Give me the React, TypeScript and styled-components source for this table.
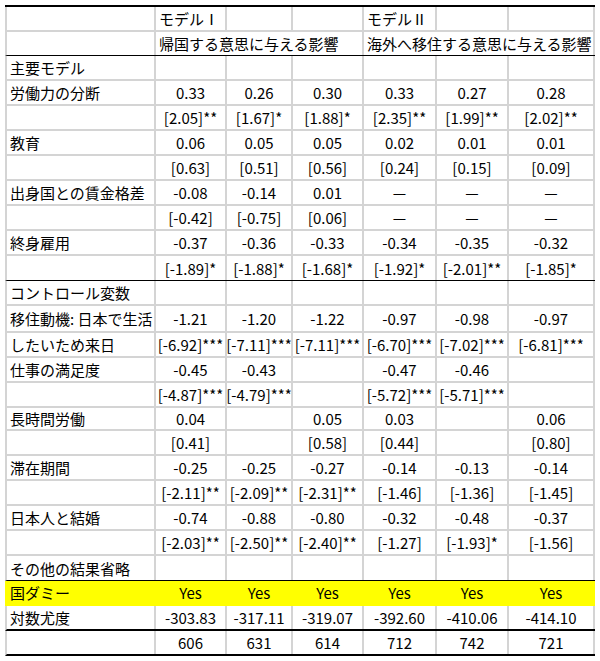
import React from "react";
import styled, { createGlobalStyle } from "styled-components";

const GRID = "#d4d4d4";
const YELLOW = "#ffff00";
const COLS = "149px 71px 66px 71px 73px 72px 86px";

type Rule = "grid" | "thin" | "thick" | "none";

interface IRow {
  label?: string;
  values?: string[];
  height?: number;
  rule?: Rule;
  highlight?: boolean;
}

const GlobalStyle = createGlobalStyle`
  html, body {
    margin: 0;
    padding: 0;
    background: #fff;
  }
  body {
    font-family: "Noto Sans CJK JP", "Noto Sans", sans-serif;
    color: #000;
  }
`;

const rows: IRow[] = [
  { label: "主要モデル" },
  { label: "労働力の分断", values: ["0.33", "0.26", "0.30", "0.33", "0.27", "0.28"] },
  { values: ["[2.05]**", "[1.67]*", "[1.88]*", "[2.35]**", "[1.99]**", "[2.02]**"] },
  { label: "教育", values: ["0.06", "0.05", "0.05", "0.02", "0.01", "0.01"] },
  { values: ["[0.63]", "[0.51]", "[0.56]", "[0.24]", "[0.15]", "[0.09]"] },
  { label: "出身国との賃金格差", values: ["-0.08", "-0.14", "0.01", "—", "—", "—"] },
  { values: ["[-0.42]", "[-0.75]", "[0.06]", "—", "—", "—"] },
  { label: "終身雇用", values: ["-0.37", "-0.36", "-0.33", "-0.34", "-0.35", "-0.32"] },
  {
    values: ["[-1.89]*", "[-1.88]*", "[-1.68]*", "[-1.92]*", "[-2.01]**", "[-1.85]*"],
    rule: "thin",
  },
  { label: "コントロール変数" },
  {
    label: "移住動機: 日本で生活",
    values: ["-1.21", "-1.20", "-1.22", "-0.97", "-0.98", "-0.97"],
    height: 27,
  },
  {
    label: "したいため来日",
    values: ["[-6.92]***", "[-7.11]***", "[-7.11]***", "[-6.70]***", "[-7.02]***", "[-6.81]***"],
  },
  { label: "仕事の満足度", values: ["-0.45", "-0.43", "", "-0.47", "-0.46", ""] },
  { values: ["[-4.87]***", "[-4.79]***", "", "[-5.72]***", "[-5.71]***", ""] },
  { label: "長時間労働", values: ["0.04", "", "0.05", "0.03", "", "0.06"], height: 23 },
  { values: ["[0.41]", "", "[0.58]", "[0.44]", "", "[0.80]"] },
  { label: "滞在期間", values: ["-0.25", "-0.25", "-0.27", "-0.14", "-0.13", "-0.14"] },
  { values: ["[-2.11]**", "[-2.09]**", "[-2.31]**", "[-1.46]", "[-1.36]", "[-1.45]"] },
  { label: "日本人と結婚", values: ["-0.74", "-0.88", "-0.80", "-0.32", "-0.48", "-0.37"] },
  { values: ["[-2.03]**", "[-2.50]**", "[-2.40]**", "[-1.27]", "[-1.93]*", "[-1.56]"] },
  { label: "その他の結果省略", rule: "thin" },
  {
    label: "国ダミー",
    values: ["Yes", "Yes", "Yes", "Yes", "Yes", "Yes"],
    highlight: true,
    rule: "none",
  },
  {
    label: "対数尤度",
    values: ["-303.83", "-317.11", "-319.07", "-392.60", "-410.06", "-414.10"],
    rule: "thick",
  },
  { values: ["606", "631", "614", "712", "742", "721"], rule: "thick" },
];

const ruleCss = (rule: Rule, fill: string) => {
  if (rule === "thin") return "1px solid #000";
  if (rule === "thick") return "2px solid #000";
  if (rule === "none") return `2px solid ${fill}`;
  return `2px solid ${GRID}`;
};

const App = () => {
  return (
    <>
      <GlobalStyle />
      <Page>
        <Sheet>
          <Row $h={25} $rule="grid">
            <Cell />
            <Cell $align="left">モデルⅠ</Cell>
            <Cell />
            <Cell />
            <Cell $align="left">モデルⅡ</Cell>
            <Cell />
            <Cell />
          </Row>
          <Row $h={24} $rule="thin">
            <Cell />
            <Cell $align="left" $span={3}>
              帰国する意思に与える影響
            </Cell>
            <Cell $align="left" $span={3}>
              海外へ移住する意思に与える影響
            </Cell>
          </Row>
          {rows.map((row, i) => {
            const fill = row.highlight ? YELLOW : "";
            const values = row.values ?? ["", "", "", "", "", ""];
            return (
              <Row
                key={i}
                $h={row.height ?? 25}
                $rule={row.rule ?? "grid"}
                $fill={fill}
              >
                <Cell $align="left" $line={fill}>
                  {row.label}
                </Cell>
                {values.map((v, j) => (
                  <Cell key={j} $line={fill}>
                    {v}
                  </Cell>
                ))}
              </Row>
            );
          })}
        </Sheet>
      </Page>
    </>
  );
};

export default App;

const Page = styled.div`
  padding: 5px 0 0 5px;
`;

const Sheet = styled.div`
  display: flex;
  flex-direction: column;
  width: 590px;
  border-top: 2px solid #000;
`;

const Row = styled.div<{ $h: number; $rule: Rule; $fill?: string }>`
  display: grid;
  grid-template-columns: ${COLS};
  box-sizing: border-box;
  height: ${(p) => p.$h}px;
  border-left: 2px solid ${(p) => p.$fill || GRID};
  border-bottom: ${(p) => ruleCss(p.$rule, p.$fill || GRID)};
  background: ${(p) => p.$fill || "transparent"};
`;

const Cell = styled.div<{ $align?: "left" | "center"; $span?: number; $line?: string }>`
  grid-column: span ${(p) => p.$span ?? 1};
  display: flex;
  align-items: center;
  justify-content: ${(p) => (p.$align === "left" ? "flex-start" : "center")};
  min-width: 0;
  padding: 0 3px;
  border-right: 2px solid ${(p) => p.$line || GRID};
  white-space: nowrap;
  font-size: 15px;
  line-height: 1;
`;
